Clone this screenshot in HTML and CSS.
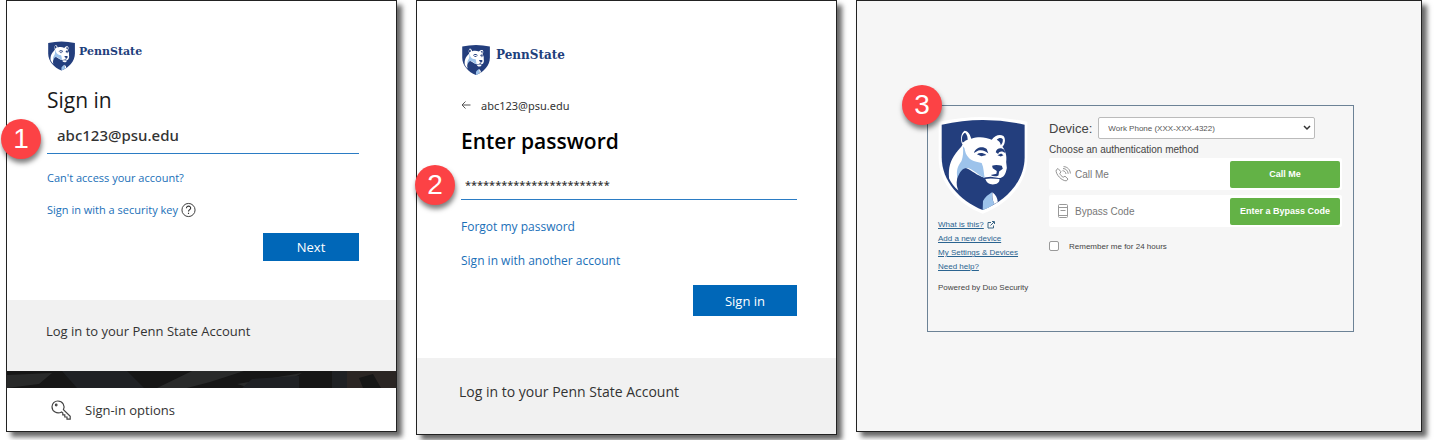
FILE: index.html
```html
<!DOCTYPE html>
<html lang="en">
<head>
    <meta charset="UTF-8">
    <meta name="viewport" content="width=device-width, initial-scale=1.0">
    <title>Penn State Sign in Steps</title>
    <link rel="stylesheet" href="styles.css">
</head>
<body>
    <!-- Shared shield logo -->
    <svg class="symbols" aria-hidden="true">
        <symbol id="shield" viewBox="24 6 268 290">
            <path fill="#fff" d="M26 22Q157-6 290 22V130C290 205 232 268 157 296C84 268 26 205 26 130Z"/>
            <path fill="#233e7d" d="M35 31Q157 3 282 31V128C282 198 228 258 157 285C88 258 35 198 35 128Z"/>
            <path fill="#fff" d="M57 191C54 158 61 138 77 116C86 104 94 98 97 90C90 78 91 57 103 49C114 49 121 63 123 73C145 66 165 68 184 76C193 64 207 58 219 65C227 74 223 91 216 97C224 107 230 124 227 142L229 160C226 177 220 190 205 190L181 186L161 188C141 183 126 168 107 160C92 154 84 174 81 192C78 207 80 217 85 227C73 217 63 204 57 191Z"/>
            <path fill="#9dc3eb" d="M98 95C100 110 99 126 94 139C84 153 77 166 82 190C90 169 98 158 113 160C129 164 142 180 163 190C160 176 161 160 154 145L138 141C117 137 106 122 103 101Z"/>
            <path fill="#9dc3eb" d="M157 285L158 258C164 246 175 238 185 232C184 246 187 257 192 267C180 276 168 282 157 285Z"/>
            <path fill="#fff" d="M165 193L181 191L207 193C208 204 199 209 187 209C175 209 168 203 165 193ZM186 232C196 239 201 249 202 261L192 267C186 255 185 243 186 232Z"/>
            <path fill="#233e7d" d="M97 84C93 73 96 58 105 55C111 61 113 69 112 77C107 76 103 83 97 84ZM199 76C205 69 213 69 217 74C218 83 214 89 211 92C210 84 205 79 199 76ZM131 115C136 98 157 94 169 103L174 117C166 109 155 105 144 108ZM196 113C198 100 213 97 222 107L225 116C216 109 207 109 203 118ZM185 153C195 149 205 151 214 153L217 162L206 170L204 182C196 186 188 185 181 181L198 177L199 169L187 161Z"/>
            <path fill="#233e7d" d="M140 119C147 114 158 114 168 121L153 125ZM201 122L212 117L219 122L211 126Z"/>
        </symbol>
    </svg>

    <main class="steps">
        <section class="panel">
            <form class="signin" id="account-form">
                <div class="logo">
                    <svg class="logo-shield"><use href="#shield"/></svg>
                    <span class="logo-name">PennState</span>
                </div>
                <h1 class="title">Sign in</h1>
                <div class="field">
                    <span class="badge">1</span>
                    <input class="field-input" type="text" aria-label="Account" value="abc123@psu.edu">
                </div>
                <div class="links">
                    <a href="#">Can't access your account?</a>
                    <div class="key-link">
                        <a href="#">Sign in with a security key</a>
                        <svg class="help-icon" viewBox="0 0 16 16" fill="none" stroke="#333">
                            <circle cx="8" cy="8" r="7"/>
                            <path d="M5.8 6.2C5.8 3 10.4 3.2 10.3 6.1C10.2 7.6 8 7.7 8 9.6M8 11v1.3" stroke-width="1.2"/>
                        </svg>
                    </div>
                </div>
                <button class="btn" type="button">Next</button>
            </form>
            <footer class="note">Log in to your Penn State Account</footer>
            <svg class="photo" viewBox="0 0 389 17" preserveAspectRatio="none" aria-hidden="true">
                <path fill="#161616" d="M0 0h389v17H0z"/>
                <path fill="#292a2a" d="M0 4L45 2L32 13L0 17ZM150 17L185 0H237L203 11L180 17ZM230 13L295 2L282 9L240 16Z"/>
                <path fill="#1f2124" d="M55 0H120L137 17H70ZM235 17L245 8L292 5V17ZM325 0H340V17H325Z"/>
                <path fill="#2b2624" d="M340 0H389V17H374L366 3L352 7L356 17H340Z"/>
            </svg>
            <div class="options">
                <svg class="key-icon" viewBox="0 0 20 20" fill="none" stroke="#444" stroke-width="1.2">
                    <path d="M10.6 12C6 14.4 1 11.5 1 6.8C1 3.4 3.6 1 6.8 1C11.9 1 14.3 6 12.4 9.7L19.2 16.2V19.2H16V17H13.8V14.9H11.8V13Z"/>
                    <circle cx="5.2" cy="5" r=".8"/>
                </svg>
                <span>Sign-in options</span>
            </div>
        </section>

        <section class="panel">
            <form class="signin signin-password" id="password-form">
                <div class="logo">
                    <svg class="logo-shield"><use href="#shield"/></svg>
                    <span class="logo-name">PennState</span>
                </div>
                <div class="identity">
                    <svg class="back-icon" viewBox="0 0 10 10" fill="none" stroke="#555">
                        <path d="M9.5 5H1M4.5 1.5L1 5L4.5 8.5"/>
                    </svg>
                    <span>abc123@psu.edu</span>
                </div>
                <h1 class="title">Enter password</h1>
                <div class="field">
                    <span class="badge">2</span>
                    <input class="field-input" type="text" aria-label="Password" value="************************">
                </div>
                <div class="links">
                    <a href="#">Forgot my password</a>
                    <a href="#">Sign in with another account</a>
                </div>
                <button class="btn" type="button">Sign in</button>
            </form>
            <footer class="note">Log in to your Penn State Account</footer>
        </section>

        <section class="panel panel-duo">
            <div class="duo">
                <span class="badge">3</span>
                <aside class="duo-side">
                    <svg class="duo-shield"><use href="#shield"/></svg>
                    <div class="duo-links">
                        <div class="external">
                            <a href="#">What is this?</a>
                            <svg class="external-icon" viewBox="0 0 8 8" fill="none" stroke="#3b6685">
                                <path d="M4 1.5H1V7H6.5V4.5M3.5 4.5L7 1M5 .5H7.5V3"/>
                            </svg>
                        </div>
                        <a href="#">Add a new device</a>
                        <a href="#">My Settings &amp; Devices</a>
                        <a href="#">Need help?</a>
                    </div>
                    <p class="powered">Powered by Duo Security</p>
                </aside>
                <form class="duo-main">
                    <div class="device">
                        <label for="device">Device:</label>
                        <div class="select-wrap">
                            <select id="device">
                                <option>Work Phone (XXX-XXX-4322)</option>
                            </select>
                            <svg class="chevron" viewBox="0 0 8 6" fill="none" stroke="#333" stroke-width="1.5">
                                <path d="M1 1L4 4L7 1"/>
                            </svg>
                        </div>
                    </div>
                    <p class="choose">Choose an authentication method</p>
                    <div class="method">
                        <svg class="method-icon" viewBox="0 0 16 16" fill="none" stroke="#888" stroke-width=".9">
                            <path d="M3 2.5L1.2 4C.2 8 7 15.3 11.5 14.8L13 13L10 10.2L8.2 11.2C6.7 10.5 5.3 8.9 4.8 7.5L6 5.8ZM7.5 4.7C9.5 4.8 10.7 6 11 8M8 2.5C11 2.6 13 4.8 13.2 7.8M8.5.6C12.5.7 15.2 3.8 15.4 7.5"/>
                        </svg>
                        <span>Call Me</span>
                        <button class="btn-green" type="button">Call Me</button>
                    </div>
                    <div class="method">
                        <svg class="method-icon" viewBox="0 0 16 16" fill="none" stroke="#999">
                            <rect x="3.5" y="1.5" width="9" height="13" rx="1"/>
                            <path d="M3.5 4.5H12.5M5.5 7.5H10.5M3.5 12.5H12.5"/>
                        </svg>
                        <span>Bypass Code</span>
                        <button class="btn-green" type="button">Enter a Bypass Code</button>
                    </div>
                    <label class="remember">
                        <input type="checkbox">
                        <span>Remember me for 24 hours</span>
                    </label>
                </form>
            </div>
        </section>
    </main>
</body>
</html>
```
FILE: styles.css
```css
* {
    box-sizing: border-box;
}
body {
    margin: 0;
    background: #fff;
    color: #333;
    font-family: "Open Sans", "Noto Sans", sans-serif;
}
h1, p {
    margin: 0;
}
a {
    color: #1a6fb8;
    text-decoration: none;
}
.symbols {
    display: block;
    width: 0;
    height: 0;
}
.steps {
    display: grid;
    grid-template-columns: 391fr 421fr 566fr;
    align-items: start;
    gap: 19px;
    padding: 0 13px 8px 6px;
}
.panel {
    min-width: 0;
    background: #fff;
    border: 1px solid #222;
    box-shadow: 5px 5px 5px rgba(0, 0, 0, 0.6);
}

/* Sign in cards */
.signin {
    display: flex;
    flex-direction: column;
    padding: 39px 37px 39px 40px;
}
.logo {
    display: flex;
    align-items: flex-start;
    gap: 3px;
    height: 32px;
}
.logo-shield {
    width: 29px;
    height: 32px;
}
.logo-name {
    color: #1e407c;
    font-family: "DejaVu Serif", serif;
    font-size: 11px;
    font-weight: bold;
    line-height: 24px;
}
.title {
    margin-top: 14px;
    color: #1b1b1b;
    font-size: 21px;
    font-weight: 500;
    line-height: 28px;
}
.field {
    position: relative;
    margin-top: 9px;
    border-bottom: 1px solid #2b7cc4;
}
.field-input {
    display: block;
    width: 100%;
    height: 30px;
    padding: 0 10px 6px;
    border: 0;
    outline: 0;
    background: transparent;
    color: #333;
    font-family: "Noto Sans", sans-serif;
    font-size: 15px;
    font-weight: 500;
}
.badge {
    position: absolute;
    top: -4px;
    left: -46px;
    width: 40px;
    height: 40px;
    border-radius: 50%;
    background: #fc4245;
    box-shadow: 1px 4px 5px rgba(0, 0, 0, 0.5);
    color: #fff;
    font-family: "Liberation Sans", sans-serif;
    font-size: 28px;
    line-height: 40px;
    text-align: center;
}
.links {
    display: flex;
    flex-direction: column;
    gap: 16px;
    margin-top: 16px;
    font-size: 11px;
    line-height: 16px;
}
.key-link {
    display: flex;
    gap: 3px;
}
.help-icon {
    width: 15px;
    height: 16px;
}
.btn {
    align-self: flex-end;
    width: 96px;
    height: 28px;
    margin-top: 15px;
    padding: 0;
    border: 0;
    background: #0067b8;
    color: #fff;
    font-family: inherit;
    font-size: 13px;
    font-weight: 500;
}
.note {
    padding: 0 39px 9px;
    background: #f1f1f1;
    font-size: 13px;
    line-height: 62px;
}
.photo {
    display: block;
    width: 100%;
    height: 17px;
}
.options {
    display: flex;
    align-items: center;
    gap: 14px;
    height: 43px;
    padding-left: 44px;
    font-size: 13px;
}
.key-icon {
    width: 20px;
    height: 20px;
}

/* Password card */
.signin-password {
    padding: 42px 39px 42px 44px;
}
.signin-password .logo {
    gap: 5px;
}
.signin-password .logo-shield {
    width: 30px;
    height: 34px;
}
.signin-password .logo-name {
    font-size: 12px;
}
.identity {
    display: flex;
    align-items: center;
    gap: 10px;
    height: 16px;
    margin-top: 22px;
    font-family: "Noto Sans", sans-serif;
    font-size: 11px;
}
.back-icon {
    width: 10px;
    height: 10px;
}
.signin-password .title {
    color: #000;
    font-weight: 600;
}
.signin-password .field {
    margin-top: 14px;
}
.signin-password .field-input {
    padding: 0 4px;
    font-size: 11px;
}
.signin-password .links {
    gap: 18px;
    margin-top: 19px;
    font-size: 12px;
}
.signin-password .btn {
    width: 104px;
    height: 31px;
    margin-top: 16px;
}
.signin-password + .note {
    padding-left: 42px;
    font-size: 14px;
    line-height: 67px;
}

/* Duo prompt */
.panel-duo {
    height: 432px;
    padding: 104px 67px 0 70px;
    background: #f6f6f6;
}
.duo {
    position: relative;
    display: flex;
    gap: 19px;
    min-height: 227px;
    padding: 10px 11px 10px 10px;
    border: 1px solid #6c8296;
    color: #444;
    font-family: "Liberation Sans", sans-serif;
}
.duo .badge {
    top: -21px;
    left: -26px;
}
.duo-side {
    flex: 0 0 92px;
}
.duo-shield {
    display: block;
    width: 90px;
    height: 98px;
}
.duo-links {
    display: flex;
    flex-direction: column;
    align-items: flex-start;
    margin-top: 4px;
    font-size: 8px;
    line-height: 14px;
    white-space: nowrap;
}
.duo-links a {
    color: #2b6490;
    text-decoration: underline;
}
.external {
    display: flex;
    align-items: center;
    gap: 3px;
}
.external-icon {
    width: 8px;
    height: 8px;
}
.powered {
    margin-top: 7px;
    font-size: 8px;
    line-height: 14px;
    white-space: nowrap;
}
.duo-main {
    flex: 1;
    min-width: 0;
}
.device {
    display: flex;
    align-items: center;
    gap: 6px;
    margin-top: 1px;
    font-size: 13px;
}
.select-wrap {
    position: relative;
    flex: 0 1 217px;
}
.select-wrap select {
    display: block;
    width: 100%;
    height: 22px;
    padding: 0 9px;
    border: 1px solid #bbb;
    border-radius: 2px;
    appearance: none;
    background: #fff;
    color: #555;
    font-family: inherit;
    font-size: 8px;
}
.chevron {
    position: absolute;
    top: 8px;
    right: 4px;
    width: 8px;
    height: 6px;
    pointer-events: none;
}
.choose {
    margin: 4px 0 2px;
    font-size: 10px;
    line-height: 13px;
}
.method {
    display: flex;
    align-items: center;
    gap: 4px;
    height: 32px;
    margin-bottom: 5px;
    padding: 0 2px 0 6px;
    border-radius: 2px;
    background: #fff;
    color: #777;
    font-size: 10px;
}
.method-icon {
    width: 16px;
    height: 16px;
}
.btn-green {
    width: 110px;
    height: 27px;
    margin-left: auto;
    padding: 0;
    border: 0;
    border-radius: 2px;
    background: #63b246;
    color: #fff;
    font-family: inherit;
    font-size: 9px;
    font-weight: bold;
}
.remember {
    display: flex;
    align-items: center;
    gap: 10px;
    margin-top: 14px;
    font-size: 8px;
}
.remember input {
    width: 10px;
    height: 10px;
    margin: 0;
    border: 1px solid #999;
    border-radius: 2px;
    appearance: none;
    background: #fff;
}
```
